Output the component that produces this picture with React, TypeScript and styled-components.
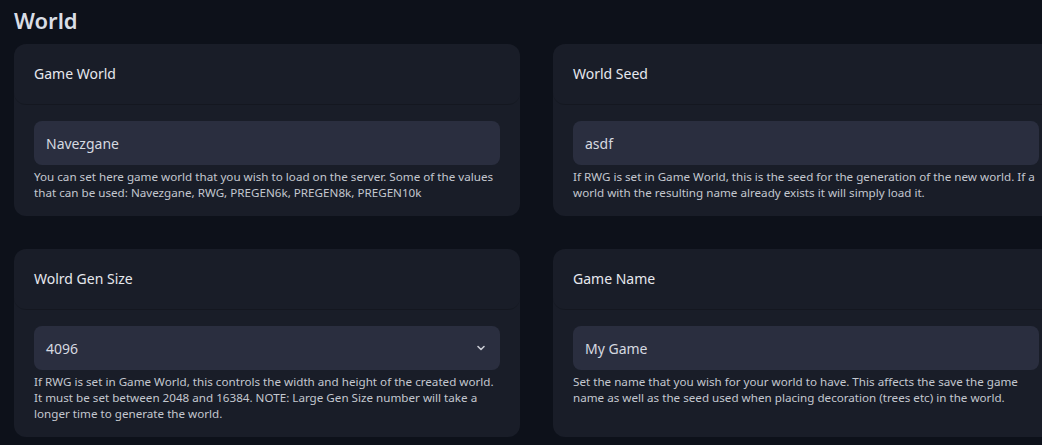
import React from "react";
import styled, { createGlobalStyle } from "styled-components";

const GlobalStyle = createGlobalStyle`
  html, body {
    margin: 0;
    padding: 0;
    background: #0d111a;
    overflow: hidden;
  }
  body {
    font-family: "Noto Sans", "Open Sans", sans-serif;
    color: #e3e6ec;
  }
`;

const Page = styled.div`
  padding: 4px 14px 0 14px;
  width: 1100px;
`;

const Heading = styled.h1`
  margin: 0 0 8px 0;
  font-size: 22px;
  line-height: 32px;
  font-weight: 600;
  color: #d9dde5;
`;

const Grid = styled.div`
  display: grid;
  grid-template-columns: 506px 506px;
  column-gap: 33px;
  row-gap: 33px;
`;

const Card = styled.section`
  background: #191d28;
  border-radius: 12px;
  display: flex;
  flex-direction: column;
`;

const CardHeader = styled.div`
  padding: 20px;
  font-size: 14px;
  line-height: 20px;
  color: #e6e8ee;
  border-bottom: 1px solid rgba(0, 0, 0, 0.18);
  border-radius: 0 0 12px 12px;
`;

const CardBody = styled.div`
  padding: 16px 20px 15px 20px;
  display: flex;
  flex-direction: column;
  gap: 4px;
`;

const Field = styled.div`
  height: 44px;
  background: #2a2e3f;
  border-radius: 8px;
  display: flex;
  align-items: center;
  justify-content: space-between;
  padding: 0 14px 0 12px;
  font-size: 14px;
  color: #d6d9e0;
`;

const Help = styled.p`
  margin: 0;
  font-size: 11.65px;
  line-height: 16px;
  color: #c3c7cf;
`;

const Chevron = () => (
  <svg width="10" height="10" viewBox="0 0 10 10" fill="none">
    <path d="M2 3.5 L5 6.5 L8 3.5" stroke="#c9ccd4" strokeWidth="1.6" strokeLinecap="round" strokeLinejoin="round" />
  </svg>
);

type Setting = { title: string; value: string; help: string; select?: boolean };

const settings: Setting[] = [
  {
    title: "Game World",
    value: "Navezgane",
    help: "You can set here game world that you wish to load on the server. Some of the values that can be used: Navezgane, RWG, PREGEN6k, PREGEN8k, PREGEN10k",
  },
  {
    title: "World Seed",
    value: "asdf",
    help: "If RWG is set in Game World, this is the seed for the generation of the new world. If a world with the resulting name already exists it will simply load it.",
  },
  {
    title: "Wolrd Gen Size",
    value: "4096",
    select: true,
    help: "If RWG is set in Game World, this controls the width and height of the created world. It must be set between 2048 and 16384. NOTE: Large Gen Size number will take a longer time to generate the world.",
  },
  {
    title: "Game Name",
    value: "My Game",
    help: "Set the name that you wish for your world to have. This affects the save the game name as well as the seed used when placing decoration (trees etc) in the world.",
  },
];

export default function App() {
  return (
    <>
      <GlobalStyle />
      <Page>
        <Heading>World</Heading>
        <Grid>
          {settings.map((s) => (
            <Card key={s.title}>
              <CardHeader>{s.title}</CardHeader>
              <CardBody>
                <Field>
                  <span>{s.value}</span>
                  {s.select && <Chevron />}
                </Field>
                <Help>{s.help}</Help>
              </CardBody>
            </Card>
          ))}
        </Grid>
      </Page>
    </>
  );
}
